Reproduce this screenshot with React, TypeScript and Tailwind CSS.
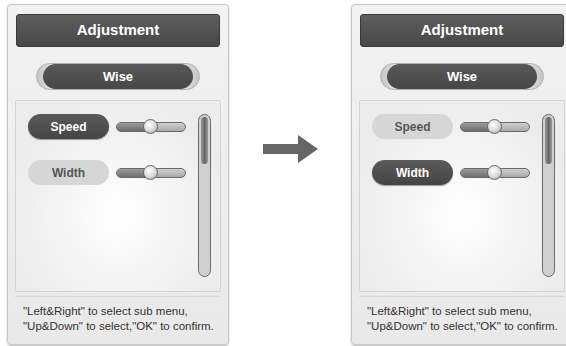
import React from "react";

function Slider() {
    return <div className="relative w-[70px] h-[10px] ml-[7px]">
        <div className="absolute inset-0 rounded-full border border-[#6a6a6a] bg-[linear-gradient(to_bottom,#d0d0d0,#a8a8a8)] overflow-hidden">
            <div className="h-full w-[50%] bg-[linear-gradient(to_bottom,#9a9a9a,#6e6e6e)]"></div>
        </div>
        <div className="absolute left-[27px] top-[-3px] w-[15px] h-[15px] rounded-full border border-[#6a6a6a] bg-[radial-gradient(circle_at_40%_35%,#ffffff,#d8d8d8_55%,#9a9a9a)]"></div>
    </div>
}

function Row({ label, active }: { label: string; active: boolean }) {
    return <div className="flex items-center">
        <div className={active
            ? "w-[81px] h-[25px] rounded-full flex items-center justify-center text-[12px] font-bold text-white bg-[linear-gradient(to_bottom,#5a5a5a,#454545)] shadow-[0_1px_1px_#999]"
            : "w-[81px] h-[25px] rounded-full flex items-center justify-center text-[12px] font-bold text-[#555] bg-[#d6d6d6]"}>
            {label}
        </div>
        <Slider />
    </div>
}

function Panel({ first }: { first: boolean }) {
    return <div className="w-[222px] h-[341px] shrink-0 flex flex-col rounded-[4px] border border-[#c8c8c8] bg-[linear-gradient(to_bottom,#f2f2f2,#e9e9e9)] shadow-[0_1px_2px_#bbb]">
        <div className="mx-[8px] mt-[9px] h-[33px] rounded-[3px] bg-[linear-gradient(to_bottom,#5e5e5e,#474747)] border border-[#3a3a3a] flex items-center justify-center text-white font-bold text-[15px]">
            Adjustment
        </div>
        <div className="mt-[16px] self-center w-[164px] h-[27px] rounded-full bg-[linear-gradient(to_right,#c4c4c4,#e4e4e4_10%,#e4e4e4_90%,#c4c4c4)] border border-[#b0b0b0] flex px-[6px] py-0">
            <div className="flex-1 rounded-full bg-[linear-gradient(to_bottom,#585858,#474747)] flex items-center justify-center text-white font-bold text-[13px]">
                Wise
            </div>
        </div>
        <div className="mx-[7px] mt-[10px] h-[192px] border border-[#d4d4d4] rounded-[2px] bg-[radial-gradient(ellipse_at_50%_60%,#ffffff,#ececec_75%)] flex pl-[12px] pr-[9px] pt-[13px]">
            <div className="flex-1 flex flex-col gap-[21px]">
                <Row label="Speed" active={first} />
                <Row label="Width" active={!first} />
            </div>
            <div className="w-[13px] h-[163px] rounded-full border border-[#6a6a6a] bg-[#cfcfcf] p-[2px] flex flex-col">
                <div className="h-[47px] rounded-full bg-[linear-gradient(to_right,#999,#666,#999)]"></div>
            </div>
        </div>
        <div className="mx-[7px] mt-[4px] border-t border-[#d8d8d8]"></div>
        <div className="pl-[15px] pt-[7px] text-[11.5px] leading-[15px] text-[#333]">
            <p>"Left&amp;Right" to select sub menu,</p>
            <p>"Up&amp;Down" to select,"OK" to confirm.</p>
        </div>
    </div>
}

export default function App() {
    return <div className="w-[566px] h-[346px] overflow-hidden bg-white flex pl-[7px] pt-[4px]" style={{ fontFamily: '"Liberation Sans", Arial, sans-serif' }}>
        <Panel first={true} />
        <div className="w-[122px] shrink-0 flex items-start justify-center pt-[131px]">
            <svg width="55" height="28" viewBox="0 0 55 28">
                <polygon points="0,9 35,9 35,0 55,14 35,28 35,19 0,19" fill="#666" />
            </svg>
        </div>
        <Panel first={false} />
    </div>
}
